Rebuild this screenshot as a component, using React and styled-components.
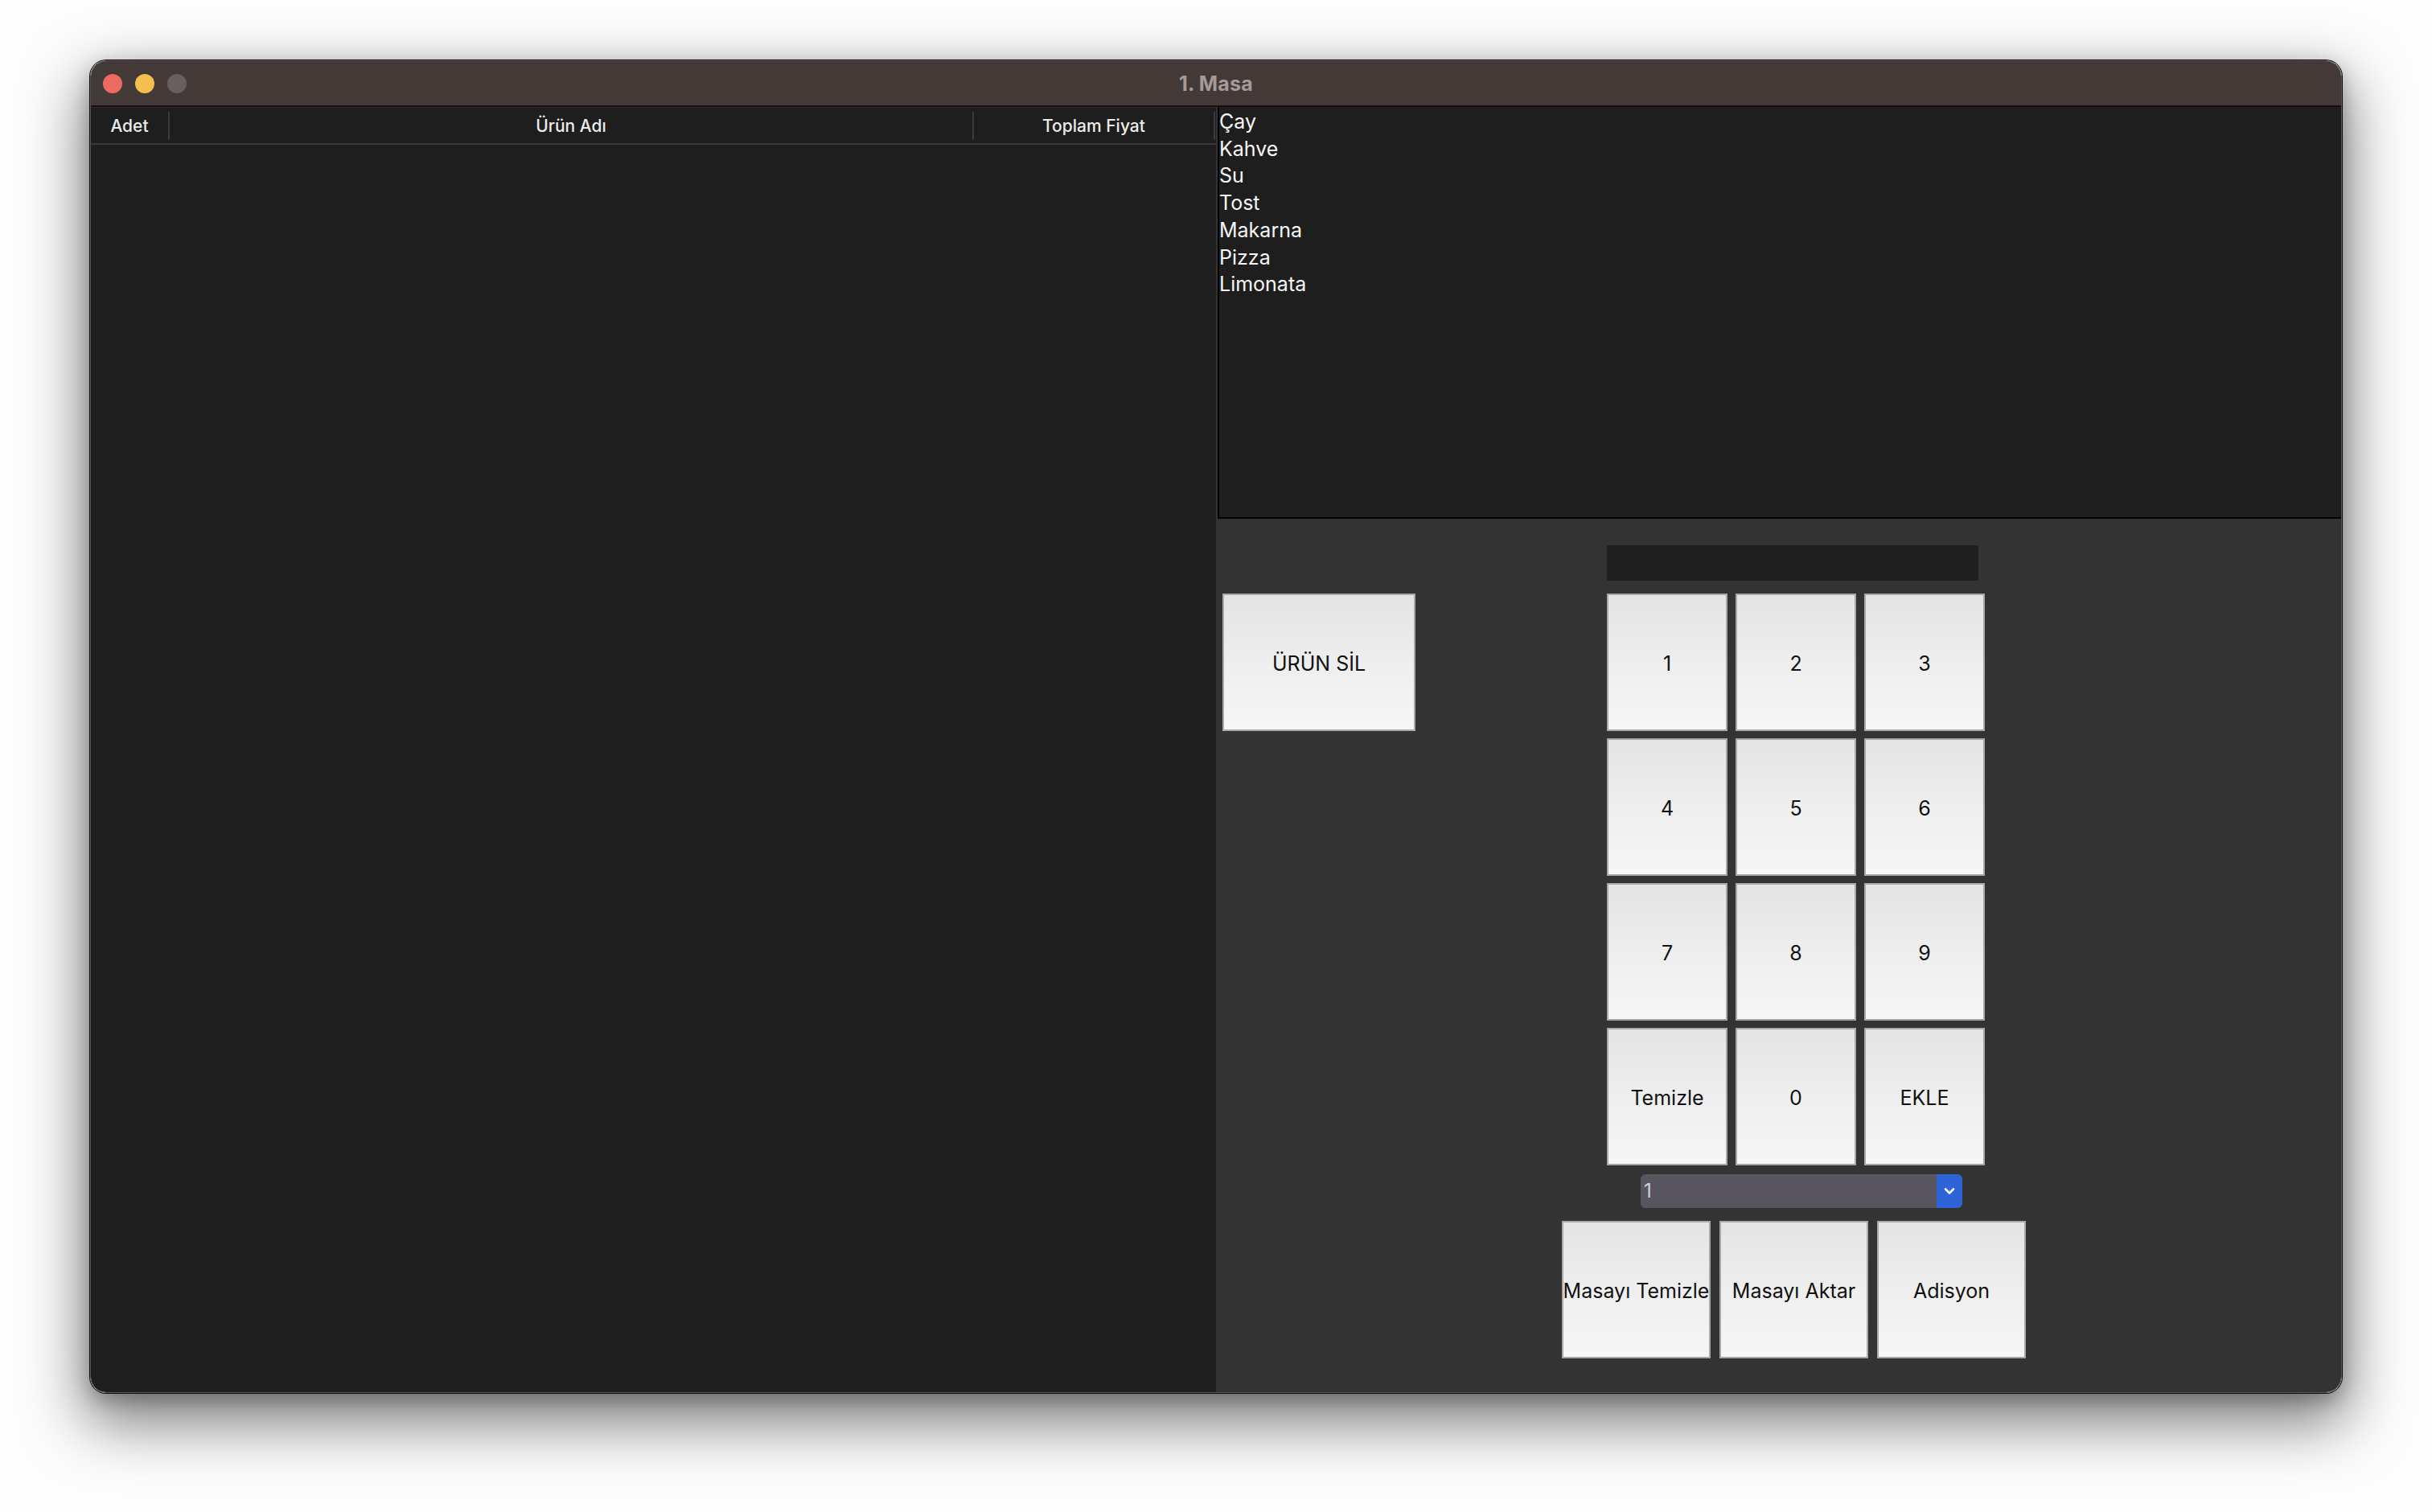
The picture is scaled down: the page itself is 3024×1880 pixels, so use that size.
import React from "react";
import styled, { createGlobalStyle } from "styled-components";

const GlobalStyle = createGlobalStyle`
  html, body {
    margin: 0;
    padding: 0;
    background: #ffffff;
  }
  body {
    font-family: Inter, "Noto Sans", sans-serif;
  }
  * { box-sizing: border-box; }
`;

const Page = styled.div`
  width: 3024px;
  height: 1880px;
  padding: 75px 0 0 112px;
  overflow: hidden;
  background: #fdfdfd;
`;

const Window = styled.div`
  width: 2800px;
  height: 1657px;
  border-radius: 20px;
  overflow: hidden;
  display: flex;
  flex-direction: column;
  border: 1px solid #5b5858;
  box-shadow: 0 0 0 1px #0b0b0b, 0 30px 75px 8px rgba(0, 0, 0, 0.5),
    0 8px 24px rgba(0, 0, 0, 0.25);
`;

const TitleBar = styled.div`
  height: 57px;
  flex: none;
  background: #433937;
  border-bottom: 2px solid #141010;
  display: grid;
  grid-template-columns: 1fr auto 1fr;
  align-items: center;
  padding: 0 15px;
`;

const Lights = styled.div`
  display: flex;
  gap: 16px;
`;

const Light = styled.span`
  width: 24px;
  height: 24px;
  border-radius: 50%;
  background: ${(p) => p.$color};
`;

const Title = styled.div`
  font-size: 25px;
  font-weight: 700;
  color: #a49b99;
  letter-spacing: 0.2px;
`;

const Body = styled.div`
  flex: 1;
  display: grid;
  grid-template-columns: 1399px 1fr;
  min-height: 0;
`;

const LeftPane = styled.div`
  background: #1e1e1e;
  display: flex;
  flex-direction: column;
`;

const TableHeader = styled.div`
  height: 47px;
  border-top: 1px solid #2b2b2b;
  border-bottom: 2px solid #383838;
  display: flex;
  align-items: center;
`;

const HeaderCell = styled.div`
  width: ${(p) => p.$w}px;
  flex: none;
  text-align: center;
  font-size: 21px;
  font-weight: 500;
  color: #ececec;
`;

const ColumnRule = styled.span`
  width: 2px;
  height: 35px;
  flex: none;
  background: #3a3a3a;
`;

const RightPane = styled.div`
  background: #333333;
  display: flex;
  flex-direction: column;
  padding-left: 2px;
`;

const ProductList = styled.ul`
  list-style: none;
  margin: 0;
  height: 512px;
  flex: none;
  padding: 2px 0 0 0;
  background: #1e1e1e;
  border-left: 2px solid #000;
  border-bottom: 2px solid #000;
`;

const ProductItem = styled.li`
  font-size: 25px;
  line-height: 33.7px;
  color: #f6f6f6;
`;

const LowerPanel = styled.div`
  flex: 1;
  display: flex;
  flex-direction: column;
  padding-top: 33px;
`;

const TopRow = styled.div`
  display: flex;
  align-items: flex-start;
`;

const SideColumn = styled.div`
  width: 484px;
  flex: none;
  padding: 60px 0 0 6px;
`;

const KeypadColumn = styled.div`
  display: flex;
  flex-direction: column;
  align-items: flex-start;
`;

const Display = styled.input`
  width: 462px;
  height: 44px;
  border: none;
  outline: none;
  background: #1f1f1f;
  color: #eee;
  font-family: Inter, sans-serif;
  font-size: 24px;
  margin: 0 0 16px 0;
  padding: 0 6px;
`;

const KeyGrid = styled.div`
  display: grid;
  grid-template-columns: repeat(3, 150px);
  grid-auto-rows: 171px;
  column-gap: 10px;
  row-gap: 9px;
`;

const KeyButton = styled.button`
  margin: 0;
  padding: 3px 0 0 0;
  border: 2px solid #a9a9a9;
  border-radius: 0;
  background: linear-gradient(to bottom, #e4e4e4 0%, #eeeeee 50%, #f6f6f6 100%);
  font-family: Inter, "Noto Sans", sans-serif;
  font-size: 25px;
  font-weight: 400;
  color: #111111;
  display: flex;
  align-items: center;
  justify-content: center;
  overflow: visible;
  white-space: nowrap;
  cursor: pointer;
`;

const DeleteButton = styled(KeyButton)`
  width: 240px;
  height: 171px;
`;

const Dropdown = styled.div`
  width: 400px;
  height: 42px;
  margin: 11px 0 0 42px;
  border-radius: 6px;
  background: #58555e;
  display: flex;
  overflow: hidden;
`;

const DropdownValue = styled.div`
  flex: 1;
  padding-left: 4px;
  font-size: 24px;
  line-height: 42px;
  color: #d2d2d2;
`;

const DropdownArrow = styled.div`
  width: 32px;
  flex: none;
  background: #2f63d8;
  border-radius: 0 6px 6px 0;
  display: flex;
  align-items: center;
  justify-content: center;
`;

const BottomRow = styled.div`
  display: grid;
  grid-template-columns: repeat(3, 185px);
  grid-auto-rows: 171px;
  column-gap: 11px;
  margin: 16px 0 0 428px;
`;

const products = ["Çay", "Kahve", "Su", "Tost", "Makarna", "Pizza", "Limonata"];
const keys = ["1", "2", "3", "4", "5", "6", "7", "8", "9", "Temizle", "0", "EKLE"];
const actions = ["Masayı Temizle", "Masayı Aktar", "Adisyon"];

export default function App() {
  return (
    <>
      <GlobalStyle />
      <Page>
        <Window>
          <TitleBar>
            <Lights>
              <Light $color="#ec6a5e" />
              <Light $color="#f4bf4f" />
              <Light $color="#67605f" />
            </Lights>
            <Title>1. Masa</Title>
            <span />
          </TitleBar>
          <Body>
            <LeftPane>
              <TableHeader>
                <HeaderCell $w={96}>Adet</HeaderCell>
                <ColumnRule />
                <HeaderCell $w={998}>Ürün Adı</HeaderCell>
                <ColumnRule />
                <HeaderCell $w={298}>Toplam Fiyat</HeaderCell>
                <ColumnRule />
              </TableHeader>
            </LeftPane>
            <RightPane>
              <ProductList>
                {products.map((p) => (
                  <ProductItem key={p}>{p}</ProductItem>
                ))}
              </ProductList>
              <LowerPanel>
                <TopRow>
                  <SideColumn>
                    <DeleteButton>ÜRÜN SİL</DeleteButton>
                  </SideColumn>
                  <KeypadColumn>
                    <Display readOnly value="" />
                    <KeyGrid>
                      {keys.map((k) => (
                        <KeyButton key={k}>{k}</KeyButton>
                      ))}
                    </KeyGrid>
                    <Dropdown>
                      <DropdownValue>1</DropdownValue>
                      <DropdownArrow>
                        <svg width="18" height="18" viewBox="0 0 18 18">
                          <polyline
                            points="4,6.5 9,11.5 14,6.5"
                            fill="none"
                            stroke="#ffffff"
                            strokeWidth="2.6"
                            strokeLinecap="round"
                            strokeLinejoin="round"
                          />
                        </svg>
                      </DropdownArrow>
                    </Dropdown>
                  </KeypadColumn>
                </TopRow>
                <BottomRow>
                  {actions.map((a) => (
                    <KeyButton key={a}>{a}</KeyButton>
                  ))}
                </BottomRow>
              </LowerPanel>
            </RightPane>
          </Body>
        </Window>
      </Page>
    </>
  );
}
